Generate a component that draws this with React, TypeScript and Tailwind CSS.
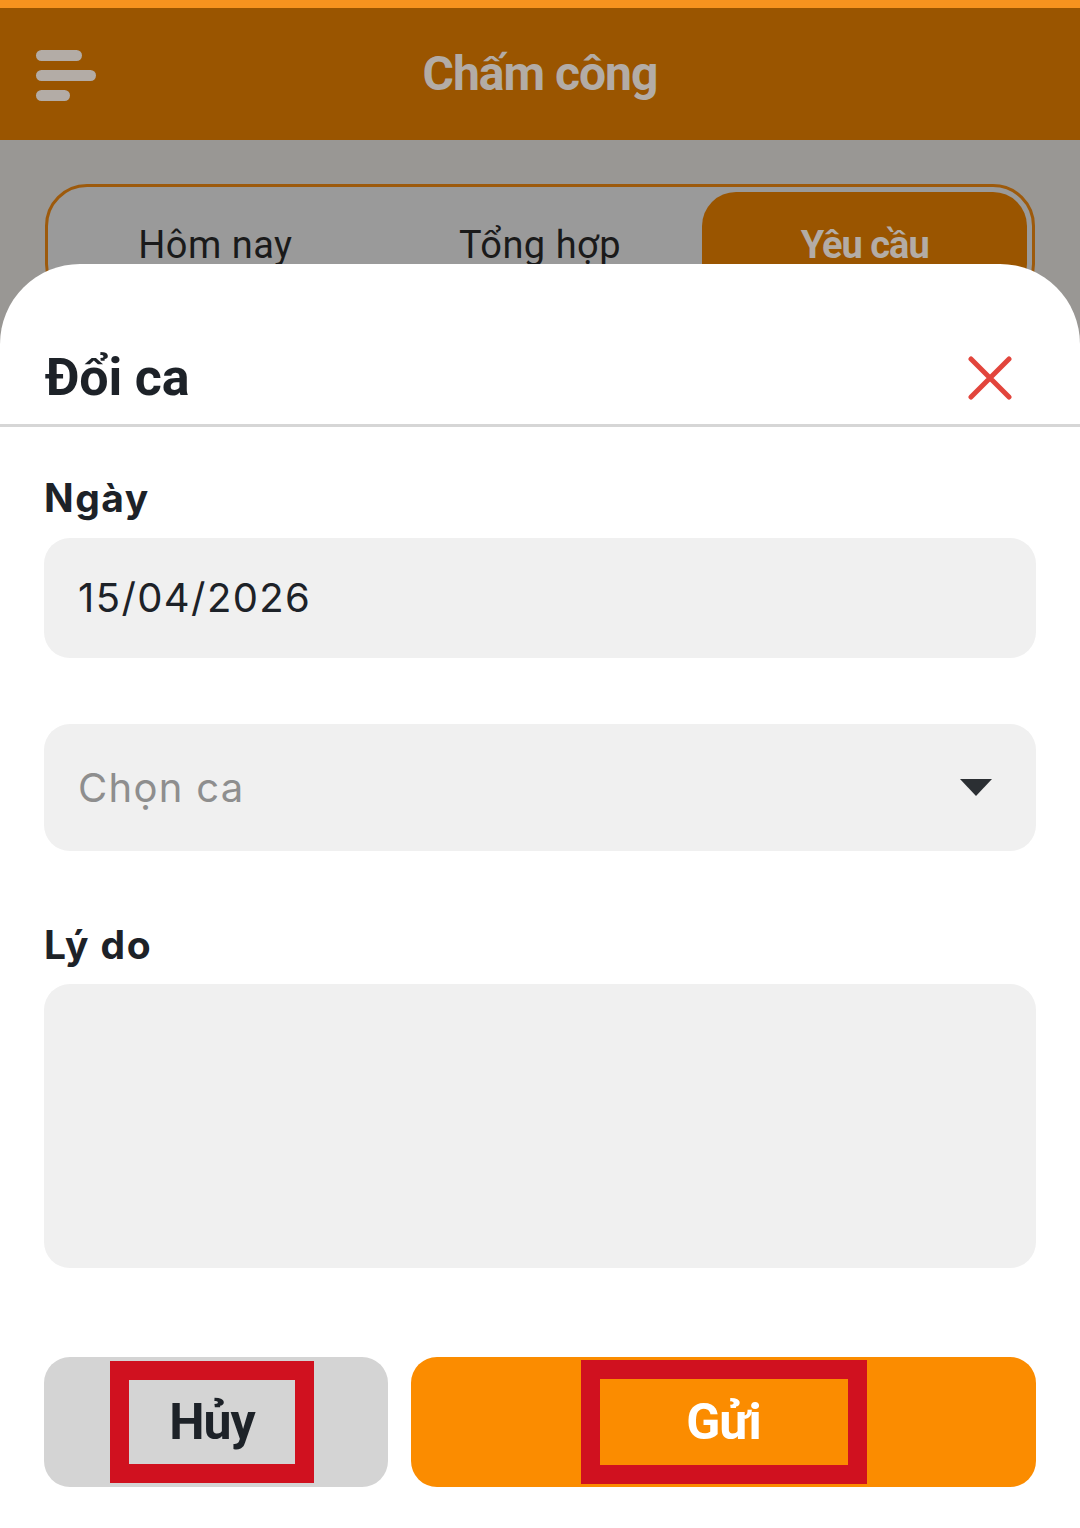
import React from "react";

const tabs = ["Hôm nay", "Tổng hợp", "Yêu cầu"];

const MenuIcon = () => (
  <div className="flex flex-col gap-[9px]">
    <span className="block h-[11px] w-[46px] rounded-full bg-[#b3aca6]" />
    <span className="block h-[11px] w-[60px] rounded-full bg-[#b3aca6]" />
    <span className="block h-[11px] w-[34px] rounded-full bg-[#b3aca6]" />
  </div>
);

const Field: React.FC<{ className?: string; children?: React.ReactNode }> = ({ className = "", children }) => (
  <div className={"flex items-center rounded-[26px] bg-[#f0f0f0] px-[34px] " + className}>{children}</div>
);

export default function App() {
  return (
    <div className="relative h-[1528px] w-[1080px] overflow-hidden bg-[#999794]" style={{ fontFamily: "Roboto, 'Noto Sans', sans-serif" }}>
      <div className="h-[8px] bg-[#f7931e]" />
      <header className="relative flex h-[132px] items-center justify-center bg-[#9a5500]">
        <div className="absolute left-[36px] top-[42px]">
          <MenuIcon />
        </div>
        <h1 className="text-[48px] font-bold tracking-[-1px] text-[#b3aca6]">Chấm công</h1>
      </header>

      <div className="px-[45px] pt-[44px]">
        <div className="flex h-[122px] rounded-[42px] border-[3px] border-[#9d5a0c] bg-[#9a9a9a] p-[5px]">
          {tabs.map((t, i) => (
            <div
              key={t}
              className={
                i === 2
                  ? "flex flex-1 items-center justify-center rounded-[34px] bg-[#9a5500] text-[38px] font-bold tracking-[-1px] text-[#b3aca6]"
                  : "flex flex-1 items-center justify-center text-[38px] tracking-[0.5px] text-[#1a1a1a]"
              }
            >
              {t}
            </div>
          ))}
        </div>
      </div>

      {/* bottom sheet */}
      <div className="absolute inset-x-0 bottom-0 top-[264px] rounded-t-[80px] bg-white">
        <div className="flex h-[160px] items-center justify-between pl-[45px] pr-[68px] pt-[68px]">
          <h2 className="text-[52px] font-bold tracking-[-0.2px] text-[#1d2228]">Đổi ca</h2>
          <svg width="44" height="44" viewBox="0 0 44 44">
            <path d="M3 3 L41 41 M41 3 L3 41" stroke="#e2453c" strokeWidth="5" strokeLinecap="round" />
          </svg>
        </div>
        <div className="h-[3px] bg-[#d6d6d6]" />

        <div className="px-[44px]" style={{ fontFamily: "Inter, 'Noto Sans', sans-serif" }}>
          <div className="mt-[47px] text-[39px] font-bold leading-[48px] tracking-[1.5px] text-[#1d2228]">Ngày</div>
          <Field className="mt-[16px] h-[120px]">
            <span className="text-[40px] tracking-[1.4px] text-[#1d2228]">15/04/2026</span>
          </Field>

          <Field className="mt-[66px] h-[127px] justify-between">
            <span className="text-[40px] tracking-[1.3px] text-[#8e8e8e]">Chọn ca</span>
            <svg width="32" height="17" viewBox="0 0 32 17" className="mr-[10px]">
              <path d="M0 0 H32 L16 17 Z" fill="#2b2f33" />
            </svg>
          </Field>

          <div className="mt-[70px] text-[39px] font-bold leading-[48px] tracking-[1.5px] text-[#1d2228]">Lý do</div>
          <Field className="mt-[15px] h-[284px]" />

          <div className="mt-[89px] flex h-[130px] gap-[23px]" style={{ fontFamily: "Roboto, 'Noto Sans', sans-serif" }}>
            <button className="flex w-[344px] items-center justify-center rounded-[26px] bg-[#d4d4d4] pr-[8px]">
              <span className="flex h-[122px] w-[204px] items-center justify-center border-[19px] border-[#d0111f] text-[50px] font-bold tracking-[-1px] text-[#1d2228]">
                Hủy
              </span>
            </button>
            <button className="flex flex-1 items-center justify-center rounded-[26px] bg-[#fb8c00]">
              <span className="flex h-[124px] w-[286px] items-center justify-center border-[19px] border-[#d0111f] text-[50px] font-bold tracking-[-1px] text-white">
                Gửi
              </span>
            </button>
          </div>
        </div>
      </div>
    </div>
  );
}
